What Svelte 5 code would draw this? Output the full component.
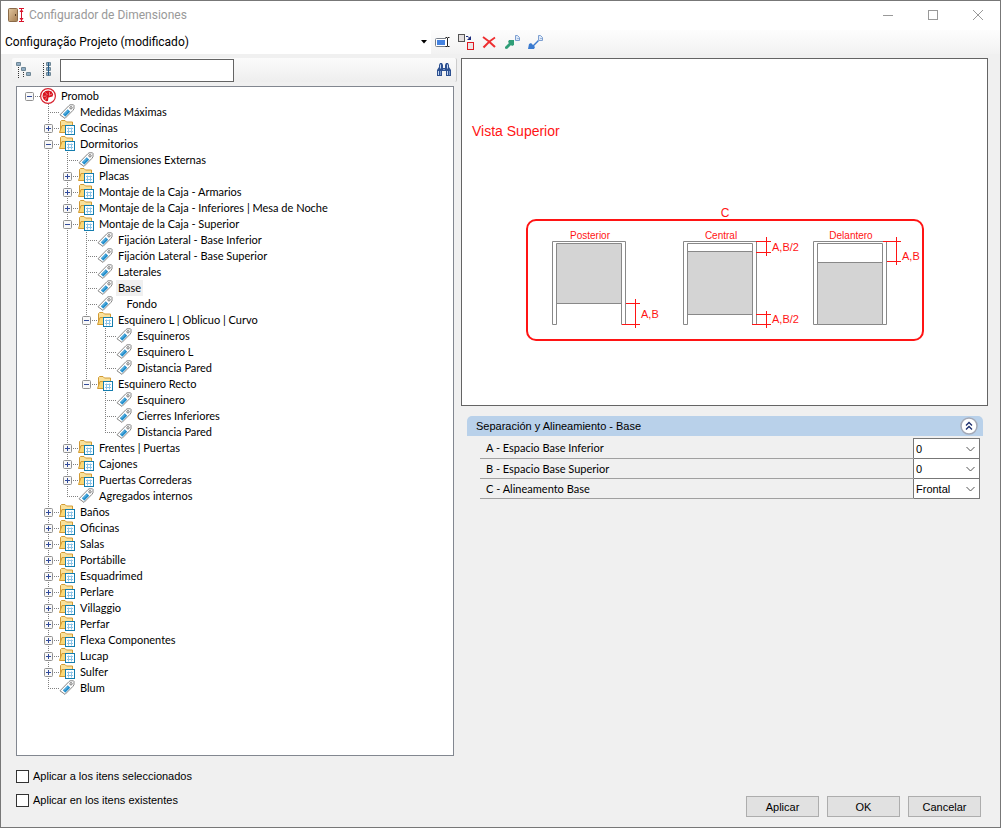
<script>
  const leaf = (label) => ({ label });
  const folder = (label, children = []) => ({ label, children, folder: true });

  const tree = {
    label: 'Promob',
    root: true,
    children: [
      leaf('Medidas Máximas'),
      folder('Cocinas'),
      folder('Dormitorios', [
        leaf('Dimensiones Externas'),
        folder('Placas'),
        folder('Montaje de la Caja - Armarios'),
        folder('Montaje de la Caja - Inferiores | Mesa de Noche'),
        folder('Montaje de la Caja - Superior', [
          leaf('Fijación Lateral - Base Inferior'),
          leaf('Fijación Lateral - Base Superior'),
          leaf('Laterales'),
          leaf('Base'),
          leaf('   Fondo'),
          folder('Esquinero L | Oblicuo | Curvo', [
            leaf('Esquineros'),
            leaf('Esquinero L'),
            leaf('Distancia Pared')
          ]),
          folder('Esquinero Recto', [
            leaf('Esquinero'),
            leaf('Cierres Inferiores'),
            leaf('Distancia Pared')
          ])
        ]),
        folder('Frentes | Puertas'),
        folder('Cajones'),
        folder('Puertas Correderas'),
        leaf('Agregados internos')
      ]),
      ...['Baños', 'Oficinas', 'Salas', 'Portábille', 'Esquadrimed', 'Perlare', 'Villaggio',
        'Perfar', 'Flexa Componentes', 'Lucap', 'Sulfer'].map((l) => folder(l)),
      leaf('Blum')
    ]
  };

  const props = [
    { id: 'a', label: 'A - Espacio Base Inferior', options: ['0'] },
    { id: 'b', label: 'B - Espacio Base Superior', options: ['0'] },
    { id: 'c', label: 'C - Alineamento Base', options: ['Frontal', 'Central', 'Posterior'] }
  ];

  let selected = $state('Base');
  let collapsed = $state({});
  let search = $state('');
  let groupOpen = $state(true);

  const isOpen = (node) => node.children?.length > 0 && !collapsed[node.label];

  function toggle(node) {
    collapsed[node.label] = !collapsed[node.label];
  }
</script>

{#snippet promobIcon()}
  <svg class="icon" viewBox="0 0 16 16" aria-hidden="true">
    <circle cx="8" cy="8" r="7.4" fill="#fff" stroke="#d8232f" stroke-width="1.2" />
    <path d="M8.500 2.500 5.500 3 3 5.300 2.500 8.500 3.600 11.300 6.200 13.300 8 13 8.400 9.400 12.500 8.400 13.200 6.200 11.600 3.600Z" fill="#d8131f" />
    <path d="M5.500 4.500 7.400 7M9.500 4V7M12 6l-3 1.500M3.500 8.400l3-.4M5.500 11.600l1-2.200" stroke="#f3a0a4" stroke-width=".8" />
  </svg>
{/snippet}

{#snippet tagIcon()}
  <svg class="icon" viewBox="0 0 16 16" aria-hidden="true">
    <path d="M1 10.800 9.800 1.800 11 .8h3.500l.5.500v3.500L13.800 6.500 6 14.400Z" fill="#fff" stroke="#858585" />
    <path d="m3.800 10.300 5-5 2.400 2.400-4.900 5Z" fill="#248fcc" />
    <path d="m5 10.500 4-4" stroke="#75c2ea" />
    <circle cx="12" cy="3.800" r="1.200" fill="#fff" stroke="#777" />
  </svg>
{/snippet}

{#snippet folderIcon()}
  <svg class="icon" viewBox="0 0 16 16" aria-hidden="true">
    <path d="M1.500 11.500v-10l1-1H6l1.500 1.500h6v9.500Z" fill="#fae19a" stroke="#d19a35" />
    <path d="M.5 12.500 3 5.500h7v7Z" fill="#fbd775" stroke="#d19a35" />
    <rect x="6.500" y="5.500" width="9" height="9" fill="#fff" stroke="#147dae" />
    <path d="M8 8.500h6M8 11.500h6M9.500 7.500v6M12.500 7.500v6" stroke="#8cc4e8" />
  </svg>
{/snippet}

{#snippet branch(node)}
  <li>
    <div class="row">
      <span class="stub">
        {#if node.children}
          <button class="expander" aria-label="Expandir {node.label}" onclick={() => toggle(node)}>
            <svg viewBox="0 0 9 9">
              <rect x=".5" y=".5" width="8" height="8" rx="1" fill="#f8f8f8" stroke="#919191" />
              <path d={isOpen(node) ? 'M2 4.5h5' : 'M2 4.5h5M4.5 2v5'} stroke="#314a9b" />
            </svg>
          </button>
        {/if}
      </span>
      {#if node.root}
        {@render promobIcon()}
      {:else if node.folder}
        {@render folderIcon()}
      {:else}
        {@render tagIcon()}
      {/if}
      <button class="label" class:selected={selected === node.label} onclick={() => (selected = node.label)}>{node.label}</button>
    </div>
    {#if isOpen(node)}
      <ul>
        {#each node.children as child}
          {@render branch(child)}
        {/each}
      </ul>
    {/if}
  </li>
{/snippet}

<div class="window">
  <header class="titlebar">
    <svg class="app-icon" viewBox="0 0 18 16" aria-hidden="true">
      <defs>
        <linearGradient id="wood" x2="1" y2="1">
          <stop offset="0" stop-color="#e3c8a0" />
          <stop offset="1" stop-color="#a57d50" />
        </linearGradient>
      </defs>
      <rect x="1.500" y="1.500" width="9" height="13" rx="1" fill="url(#wood)" stroke="#8a6a48" />
      <path d="M8.500 7v2" stroke="#5b4025" />
      <path d="M12 1.500h5M12 14.500h5M14.500 2v12" stroke="#d8122a" />
      <path d="m14.500 2-2 3h4ZM14.500 14l-2-3h4Z" fill="#d8122a" />
    </svg>
    <h1>Configurador de Dimensiones</h1>
    <div class="caption-buttons">
      <button aria-label="Minimizar"><svg viewBox="0 0 12 12"><path d="M1 6.500h10" /></svg></button>
      <button aria-label="Maximizar"><svg viewBox="0 0 12 12"><rect x="1.500" y="1.500" width="9" height="9" /></svg></button>
      <button aria-label="Cerrar"><svg viewBox="0 0 12 12"><path d="m1 1 10 10M11 1 1 11" /></svg></button>
    </div>
  </header>

  <div class="toolbar">
    <div class="project">
      <select aria-label="Configuración">
        <option>Configuração Projeto (modificado)</option>
      </select>
      <svg viewBox="0 0 6 4" aria-hidden="true"><path d="M0 0h6L3 3.500Z" /></svg>
    </div>
    <button aria-label="Renombrar">
      <svg viewBox="0 0 16 16">
        <rect x=".5" y="4.500" width="13" height="8" rx="1" fill="#fff" stroke="#777f8a" />
        <rect x="2" y="6" width="8" height="5" fill="#4583e0" />
        <path d="M12.500 4v8" stroke="#fff" stroke-width="3" />
        <path d="M10.500 3.500H12l.5.500.500-.500h1.500M10.500 12.500H12l.5-.5.5.5h1.500M12.500 4v8" fill="none" stroke="#222" />
      </svg>
    </button>
    <button aria-label="Reemplazar">
      <svg viewBox="0 0 16 16">
        <rect x=".5" y=".5" width="6" height="7" fill="#e4e0e0" stroke="#555" />
        <rect x="9.500" y="8.500" width="6" height="7" fill="#ece5e5" stroke="#e01820" />
        <path d="M8 2.500h2l2 2" fill="none" stroke="#1c2c7c" />
        <path d="M13 2v4H9Z" fill="#1c2c7c" />
      </svg>
    </button>
    <button aria-label="Eliminar">
      <svg viewBox="0 0 16 16">
        <path d="M2 3Q8 7 14 13M14 3.500Q8 7 2.500 13.500" fill="none" stroke="#ee2e30" stroke-width="2" />
      </svg>
    </button>
    <button aria-label="Exportar">
      <svg viewBox="0 0 16 16">
        <path d="m1 13 4-4-1-1 1-2h5v5l-2 1-1-1-4 4-2-.5Z" fill="#2f9e77" />
        <path d="M11.500 1.500h2l2 2v3h-4Z" fill="#dce8f8" stroke="#7d9fd0" />
        <path d="M13 4.500h2" stroke="#9db8de" />
      </svg>
    </button>
    <button aria-label="Importar">
      <svg viewBox="0 0 16 16">
        <path d="m11 6-5 5-2-2-2 1-1 5h6l1-2-1-1 5-5Z" fill="#3b7bd0" />
        <path d="M11.500 1.500h2l2 2v3h-4Z" fill="#dce8f8" stroke="#7d9fd0" />
        <path d="M13 4.500h2" stroke="#9db8de" />
      </svg>
    </button>
  </div>

  <main>
    <section class="left">
      <div class="searchbar">
        <button aria-label="Expandir todo">
          <svg viewBox="0 0 16 16" fill="none">
            <path d="M2.500 5v11M7.500 10v6" stroke="#333" stroke-dasharray="1 1" />
            <path d="M.5.500h4v3h-4ZM5.500 5.500h4v3h-4ZM10.500 10.500h4v3h-4Z" fill="#fff" stroke="#6e8796" />
            <path d="M1 2h3M6 7h3M11 12h3" stroke="#245b88" />
          </svg>
        </button>
        <button aria-label="Contraer todo">
          <svg viewBox="0 0 16 16" fill="none">
            <path d="M4.500 1v15" stroke="#333" stroke-dasharray="1 1" />
            <path d="M7.500.500h4v3h-4ZM7.500 5.500h4v3h-4ZM7.500 10.500h4v3h-4Z" fill="#fff" stroke="#6e8796" />
            <path d="M8 2h3M8 7h3M8 12h3M9.500.500v13" stroke="#245b88" />
          </svg>
        </button>
        <input type="text" aria-label="Buscar" bind:value={search} />
        <button class="find" aria-label="Buscar">
          <svg viewBox="0 0 16 16">
            <path d="M4 1h2l1 2v3h2V3l1-2h2l1 2v2l2 3v6h-5V9H6v5H1V8l2-3V3Z" fill="#2d5090" />
            <path d="M4.500 2.500v4M11.500 2.500v4M2.500 9v4M11.500 9v4" stroke="#c4d8f4" />
            <path d="M4.500 9v4M13.500 9v4M7 7.500h2" stroke="#7896c8" />
          </svg>
        </button>
      </div>
      <ul class="tree">
        {@render branch(tree)}
      </ul>
      <div class="checks">
        <label><input type="checkbox" />Aplicar a los itens seleccionados</label>
        <label><input type="checkbox" />Aplicar en los itens existentes</label>
      </div>
    </section>

    <section class="right">
      <div class="preview">
        <svg viewBox="0 0 525 346" role="img" aria-label="Vista Superior">
          <text x="10" y="77" font-size="14">Vista Superior</text>
          <text x="263" y="158" font-size="12" text-anchor="middle">C</text>
          <rect class="frame" x="65" y="161" width="396" height="120" rx="9" />
          <g font-size="10" text-anchor="middle">
            <text x="128" y="180">Posterior</text>
            <text x="259" y="180">Central</text>
            <text x="389" y="180">Delantero</text>
          </g>
          <g class="cabinet">
            <path class="panel" d="M94.500 184.500h65v60h-65Z" />
            <path d="M90.500 182.500h73v83h-4v-81h-65v81h-4Z" />
            <path class="panel" d="M225.500 192.500h65v63h-65Z" />
            <path d="M221.500 182.500h73v83h-4v-81h-65v81h-4Z" />
            <path class="panel" d="M355.500 203.500h66v62h-66Z" />
            <path d="M351.500 182.500h73v83h-4v-81h-65v81h-4Z" />
          </g>
          <path class="dim" d="M164 244.500h14M160 265.500h18M173.500 240v29
            M294 182.500h15M294 193.500h15M304.500 178v19
            M294 255.500h15M290 265.500h19M304.500 252v17
            M421 182.500h18M425 202.500h14M434.500 178v28" />
          <g font-size="11">
            <text x="179" y="259">A,B</text>
            <text x="310" y="192">A,B/2</text>
            <text x="310" y="264">A,B/2</text>
            <text x="440" y="201">A,B</text>
          </g>
        </svg>
      </div>

      <div class="group">
        <div class="group-header">
          <h2>Separación y Alineamiento - Base</h2>
          <button aria-label="Contraer grupo" onclick={() => (groupOpen = !groupOpen)}>
            <svg viewBox="0 0 18 18">
              <circle cx="9" cy="9" r="8" fill="#fff" stroke="#a4a9b6" stroke-width="1.500" />
              <path d="m6 8.500 3-3 3 3M6 12.500l3-3 3 3" fill="none" stroke="#1b2e6e" stroke-width="1.300" />
            </svg>
          </button>
        </div>
        {#if groupOpen}
          <table>
            <tbody>
              {#each props as prop}
                <tr>
                  <th scope="row"><label for={prop.id}>{prop.label}</label></th>
                  <td>
                    <div class="combo">
                      <select id={prop.id}>
                        {#each prop.options as option}
                          <option>{option}</option>
                        {/each}
                      </select>
                      <svg viewBox="0 0 9 6" aria-hidden="true"><path d="m.5 1 4 4 4-4" /></svg>
                    </div>
                  </td>
                </tr>
              {/each}
            </tbody>
          </table>
        {/if}
      </div>

      <footer>
        <button>Aplicar</button>
        <button>OK</button>
        <button>Cancelar</button>
      </footer>
    </section>
  </main>
</div>

<style>
  :global(body) {
    margin: 0;
  }

  .window {
    box-sizing: border-box;
    min-height: 100vh;
    display: flex;
    flex-direction: column;
    border: 1px solid #777;
    background: #f0f0f0;
    color: #000;
    font: 11px/16px 'Liberation Sans', Arial, sans-serif;
  }

  button,
  input,
  select {
    font: inherit;
    color: inherit;
    margin: 0;
  }

  button {
    padding: 0;
    border: none;
    background: none;
  }

  svg {
    display: block;
  }

  h1,
  h2 {
    margin: 0;
    font-size: inherit;
    font-weight: normal;
  }

  ul {
    margin: 0;
    padding: 0;
    list-style: none;
  }

  select {
    appearance: none;
    border: none;
    border-radius: 0;
    background: transparent;
    outline: none;
  }

  .titlebar {
    display: flex;
    align-items: center;
    height: 28px;
    padding: 0 0 1px 6px;
    background: #fff;
    color: #999;
    font: 12px/16px Roboto, 'Segoe UI', sans-serif;
  }

  .app-icon {
    width: 18px;
    height: 16px;
    margin-right: 4px;
  }

  .caption-buttons {
    display: flex;
    margin-left: auto;
  }

  .caption-buttons button {
    width: 45px;
    height: 28px;
  }

  .caption-buttons svg {
    width: 12px;
    height: 12px;
    margin: 0 auto;
    fill: none;
    stroke: #999;
  }

  .toolbar {
    display: flex;
    align-items: center;
    gap: 7px;
    height: 24px;
    background: linear-gradient(#fdfdfd, #f2f2f2);
  }

  .toolbar svg {
    width: 16px;
    height: 16px;
  }

  .project {
    display: grid;
    align-items: center;
    width: 43%;
    height: 24px;
    margin-right: -3px;
    background: #fff;
    font: 12px/16px Roboto, 'Segoe UI', sans-serif;
  }

  .project select {
    grid-area: 1 / 1;
    width: 100%;
    padding: 0 16px 0 4px;
  }

  .project svg {
    grid-area: 1 / 1;
    justify-self: end;
    width: 6px;
    height: 4px;
    margin-right: 4px;
    pointer-events: none;
  }

  main {
    flex: 1;
    display: grid;
    grid-template-columns: 445fr 527fr;
    padding: 4px 12px 10px 11px;
    column-gap: 4px;
  }

  .left,
  .right {
    display: flex;
    flex-direction: column;
    min-width: 0;
  }

  .searchbar {
    display: flex;
    align-items: center;
    gap: 7px;
    height: 24px;
    padding: 0 4px;
    border-right: 1px solid #ccc;
    border-radius: 2px;
    background: linear-gradient(#fbfbfb, #eee);
  }

  .searchbar svg {
    width: 16px;
    height: 16px;
  }

  .searchbar input {
    box-sizing: border-box;
    width: 174px;
    height: 23px;
    margin-left: -2px;
    padding: 0 4px;
    border: 1px solid #646464;
    border-radius: 0;
    background: #fff;
  }

  .find {
    margin-left: auto;
  }

  .tree {
    flex: 1;
    margin: 4px 3px 0 4px;
    padding: 1px 3px;
    border: 1px solid #828790;
    background: #fff;
    font-family: Lato, Arial, sans-serif;
  }

  .tree ul {
    padding-left: 19px;
  }

  .tree ul li {
    background: repeating-linear-gradient(#808080 0 1px, transparent 1px 2px) 9px 0 / 1px 100% no-repeat;
  }

  .tree ul li:last-child {
    background-size: 1px 8px;
  }

  .row {
    display: flex;
    align-items: center;
    height: 16px;
  }

  .stub {
    flex: none;
    box-sizing: border-box;
    width: 20px;
    height: 16px;
    padding: 4px 0 0 5px;
    background: repeating-linear-gradient(90deg, #808080 0 1px, transparent 1px 2px) 9px 8px / 11px 1px no-repeat;
  }

  .expander,
  .expander svg {
    display: block;
    width: 9px;
    height: 9px;
  }

  .icon {
    flex: none;
    width: 16px;
    height: 16px;
  }

  .label {
    margin-left: 3px;
    padding: 0 2px;
    height: 16px;
    white-space: pre;
  }

  .label.selected {
    background: #f0f0f0;
  }

  .checks {
    display: flex;
    flex-direction: column;
    gap: 8px;
    margin: 12px 0 9px 4px;
  }

  .checks label {
    display: flex;
    align-items: center;
    gap: 4px;
  }

  .checks input {
    appearance: none;
    box-sizing: border-box;
    width: 13px;
    height: 13px;
    border: 1px solid #333;
    background: #fff;
  }

  .checks input:checked {
    background: #333;
    box-shadow: inset 0 0 0 2px #fff;
  }

  .preview {
    border: 1px solid #646464;
    background: #fff;
  }

  .preview svg {
    width: 100%;
  }

  .preview text {
    fill: #ff1414;
  }

  .frame {
    fill: none;
    stroke: #ff1414;
    stroke-width: 2;
  }

  .cabinet path {
    fill: #fff;
    stroke: #888;
  }

  .cabinet .panel {
    fill: #d4d4d4;
  }

  .dim {
    fill: none;
    stroke: #ff1414;
  }

  .group {
    margin: 10px 5px 0 6px;
  }

  .group-header {
    display: flex;
    align-items: center;
    justify-content: space-between;
    height: 20px;
    padding: 0 5px 0 9px;
    border-radius: 5px 5px 0 0;
    background: #b9d1ea;
  }

  .group-header svg {
    width: 18px;
    height: 18px;
  }

  table {
    width: calc(100% - 16px);
    margin: 2px 3px 0 13px;
    border-collapse: collapse;
  }

  th {
    padding: 0 6px;
    border-bottom: 1px solid #a0a0a0;
    font-family: Lato, Arial, sans-serif;
    font-weight: normal;
    text-align: left;
  }

  td {
    width: 65px;
    padding: 0;
    border: 1px solid #777;
    background: #fff;
  }

  .combo {
    display: grid;
    align-items: center;
    height: 19px;
  }

  .combo select {
    grid-area: 1 / 1;
    width: 100%;
    padding: 0 16px 0 2px;
  }

  .combo svg {
    grid-area: 1 / 1;
    justify-self: end;
    width: 9px;
    height: 6px;
    margin-right: 4px;
    fill: none;
    stroke: #555;
    pointer-events: none;
  }

  footer {
    display: flex;
    justify-content: flex-end;
    gap: 8px;
    margin-top: auto;
    padding-right: 7px;
  }

  footer button {
    width: 73px;
    height: 21px;
    border: 1px solid #adadad;
    background: #e1e1e1;
  }
</style>
